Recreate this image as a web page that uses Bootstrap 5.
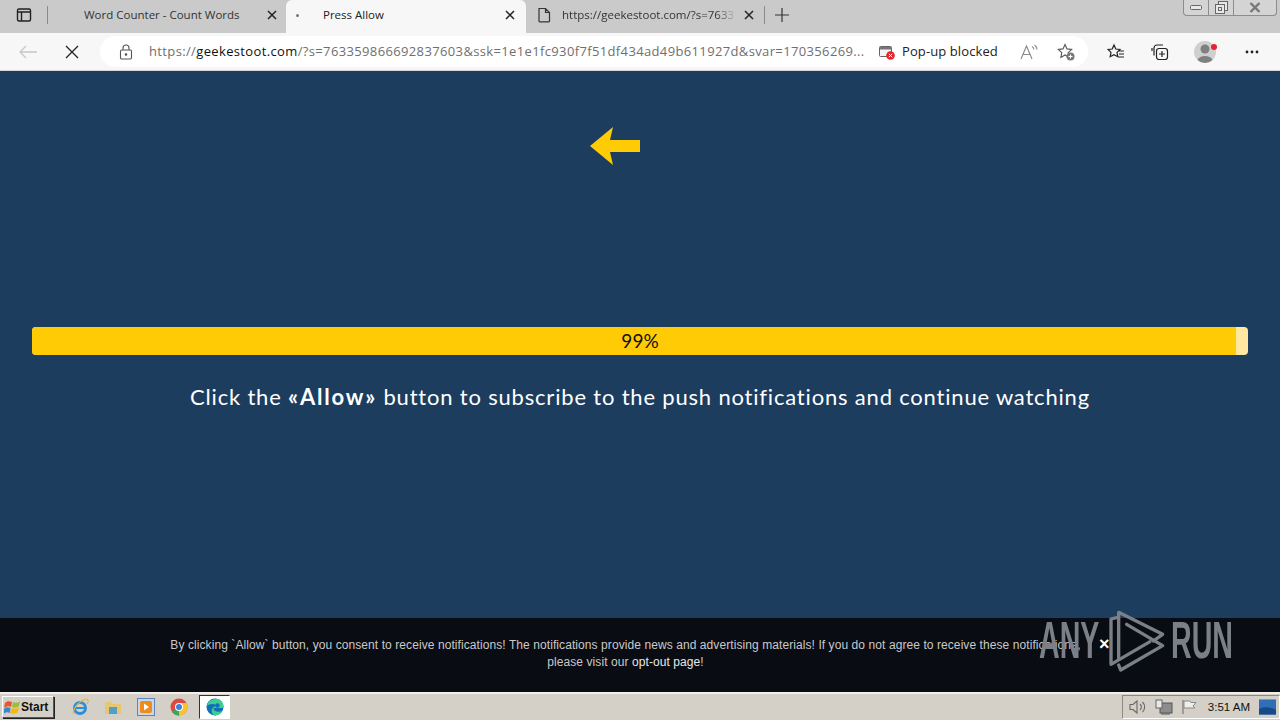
<!DOCTYPE html>
<html lang="en">
<head>
<meta charset="UTF-8" />
<meta name="viewport" content="width=device-width, initial-scale=1.0" />
<title>Press Allow</title>
<link href="https://cdn.jsdelivr.net/npm/bootstrap@5.3.3/dist/css/bootstrap.min.css" rel="stylesheet" />
<style>
  html, body { height: 720px; overflow: hidden; }
  body { width: 1280px; font-family: "Open Sans", "Liberation Sans", sans-serif; background: #1d3d5f; }
  svg { display: block; flex: none; }

  .tab-strip { height: 33px; background: #cacaca; font-size: 11.5px; color: #333; }
  .strip-btn { width: 47px; padding-bottom: 3px; }
  .strip-sep { width: 1px; height: 18px; background: #8a8a8a; margin-bottom: 3px; }
  .edge-tab { height: 33px; flex: none; padding-bottom: 3px; }
  .tab-one { width: 238px; padding-left: 36px; padding-right: 9px; }
  .tab-two { width: 240px; background: #f7f7f7; border-radius: 6px 6px 0 0; padding-left: 10px; padding-right: 11px; color: #222; }
  .tab-three { width: 238px; padding-left: 11px; padding-right: 10px; }
  .tab-dot { width: 3px; height: 3px; background: #777; border-radius: 50%; margin-right: 24px; }
  .tab-url { width: 175px; margin-left: 11px; white-space: nowrap; -webkit-mask-image: linear-gradient(90deg, #000 88%, transparent); mask-image: linear-gradient(90deg, #000 88%, transparent); }
  .new-tab { margin-left: 9px; margin-bottom: 3px; }
  .win-btns { margin-left: auto; margin-right: 3px; height: 16px; width: 94px; border: 1px solid #8d8d8d; border-top: 0; border-radius: 0 0 4px 4px; background: #d4d4d4; align-self: flex-start; }
  .win-slot { width: 25px; height: 100%; border-right: 1px solid #8d8d8d; }

  .tool-bar { height: 38px; background: #f7f7f7; border-bottom: 1px solid #d6d6d6; padding-left: 18px; }
  .stop-icon { margin-left: 27px; }
  .addr-pill { width: 988px; height: 31px; margin-left: 21px; background: #fff; border-radius: 16px; padding-left: 19px; font-size: 13px; color: #6f6f6f; white-space: nowrap; letter-spacing: .36px; }
  .addr-url { width: 716px; margin-left: 16px; overflow: hidden; }
  .addr-url b { font-weight: 400; color: #111; }
  .popup-icon { margin-left: 14px; }
  .popup-note { margin-left: 7px; color: #222; letter-spacing: .1px; }
  .read-icon { margin-left: auto; }
  .fav-add { margin-left: 19px; margin-right: 13px; }
  .tool-right { margin-left: 19px; }
  .gap-coll { margin-left: 26px; }
  .gap-prof { margin-left: 25px; }
  .gap-dots { margin-left: 27px; }

  .page-main { height: 547px; background: #1d3d5f; padding: 55px 32px 0; }
  .arrow-icon { margin-right: 50px; }
  .load-track { height: 28px; margin-top: 161px; background: #ffe9a0; border-radius: 4px; overflow: hidden; position: relative; }
  .load-fill { height: 100%; background: #ffcb05; }
  .load-label { position: absolute; inset: 0; color: #111; font-size: 19px; line-height: 28px; font-family: "Lato", sans-serif; }
  .watch-msg { margin-top: 27px; font-size: 22px; line-height: 30px; letter-spacing: .81px; color: #fff; font-family: "Lato", sans-serif; }
  .watch-msg b { letter-spacing: 1.8px; }

  .consent-bar { height: 74px; background: #090c13; padding: 19px 29px 0 0; color: #c9c9c9; font: 12px/17px "Liberation Sans", sans-serif; letter-spacing: .08px; }
  .consent-bar a { color: #e8e8e8; text-decoration: none; }
  .consent-x { position: absolute; left: 1099px; top: 637px; color: #fff; font: 700 18px/14px "Liberation Sans", sans-serif; }
  .run-mark { position: absolute; left: 1039px; top: 605px; height: 70px; color: #7b8088; }
  .run-word { font: 700 52px/70px "Liberation Sans", sans-serif; transform: scaleX(.55); transform-origin: left center; width: 61px; white-space: nowrap; }

  .task-bar { height: 28px; background: #d4d0c8; border-top: 2px solid #f1efe9; padding-left: 2px; font: 12px "Liberation Sans", sans-serif; color: #111; }
  .start-btn { width: 52px; height: 22px; border: 1px solid #fff; border-right-color: #555; border-bottom-color: #555; box-shadow: 1px 1px 0 #222; font-weight: 700; font-size: 12px; padding-left: 1px; }
  .quick-icons { margin-left: 17px; gap: 15px; }
  .edge-slot { width: 31px; height: 24px; margin-left: -4px; background: #fff; border: 1px solid #333; border-right-color: #fff; border-bottom-color: #fff; }
  .sys-tray { margin-left: auto; width: 158px; height: 24px; border: 1px solid #8c8a84; border-right-color: #fff; border-bottom-color: #fff; padding-left: 6px; }
  .clock-txt { margin-left: auto; margin-right: 1px; white-space: nowrap; font-size: 11.5px; }
  .desk-icon { margin-right: 3px; }
</style>
</head>
<body class="d-flex flex-column">

  <!-- browser tabs -->
  <div class="tab-strip d-flex align-items-center">
    <div class="strip-btn d-flex justify-content-center">
      <svg width="16" height="16" viewBox="0 0 16 16" fill="none" stroke="#222" stroke-width="1.4"><rect x="1.5" y="2" width="13" height="12" rx="1.5"/><path d="M1.5 5h13M5.5 5v9" /></svg>
    </div>
    <div class="strip-sep"></div>
    <div class="edge-tab tab-one d-flex align-items-center">
      <span>Word Counter - Count Words</span>
      <svg class="ms-auto" width="10" height="10" viewBox="0 0 10 10" stroke="#222" stroke-width="1.5"><path d="M1 1l8 8M9 1l-8 8"/></svg>
    </div>
    <div class="edge-tab tab-two d-flex align-items-center">
      <span class="tab-dot"></span>
      <span>Press Allow</span>
      <svg class="ms-auto" width="10" height="10" viewBox="0 0 10 10" stroke="#222" stroke-width="1.5"><path d="M1 1l8 8M9 1l-8 8"/></svg>
    </div>
    <div class="edge-tab tab-three d-flex align-items-center">
      <svg width="14" height="16" viewBox="0 0 14 16" fill="none" stroke="#333" stroke-width="1.2"><path d="M2 1.500h6.500L12.500 5.500V14a.8.8 0 0 1-.8.8H2.800A.8.8 0 0 1 2 14zM8.500 1.500v4h4"/></svg>
      <span class="tab-url">https://geekestoot.com/?s=7633</span>
      <svg class="ms-auto" width="10" height="10" viewBox="0 0 10 10" stroke="#222" stroke-width="1.5"><path d="M1 1l8 8M9 1l-8 8"/></svg>
    </div>
    <div class="strip-sep"></div>
    <svg class="new-tab" width="16" height="16" viewBox="0 0 16 16" stroke="#333" stroke-width="1.2"><path d="M8 1v14M1 8h14"/></svg>
    <div class="win-btns d-flex">
      <div class="win-slot d-flex align-items-center justify-content-center"><svg width="12" height="5" viewBox="0 0 12 5" fill="#e8e8e8" stroke="#666"><rect x=".5" y=".5" width="11" height="4" rx="1"/></svg></div>
      <div class="win-slot d-flex align-items-center justify-content-center"><svg width="13" height="13" viewBox="0 0 13 13" fill="#e8e8e8" stroke="#666"><rect x="3.500" y=".5" width="9" height="9"/><rect x=".5" y="3.500" width="9" height="9"/><rect x="3.500" y="6.500" width="3" height="3"/></svg></div>
      <div class="flex-fill d-flex align-items-center justify-content-center"><svg width="14" height="11" viewBox="0 0 14 11" stroke="#777" stroke-width="2.400"><path d="M2.500 1l9 9M11.500 1l-9 9"/></svg></div>
    </div>
  </div>

  <!-- address bar -->
  <div class="tool-bar d-flex align-items-center">
    <svg width="20" height="16" viewBox="0 0 20 16" fill="none" stroke="#c8c8c8" stroke-width="1.300"><path d="M19 8H2M8 2L2 8l6 6"/></svg>
    <svg class="stop-icon" width="14" height="14" viewBox="0 0 14 14" stroke="#222" stroke-width="1.300"><path d="M1 1l12 12M13 1L1 13"/></svg>
    <div class="addr-pill d-flex align-items-center">
      <svg width="14" height="16" viewBox="0 0 14 16" fill="none" stroke="#555" stroke-width="1.100"><rect x="1.500" y="6" width="11" height="9" rx="1.200"/><path d="M4 6V4a3 3 0 0 1 6 0v2"/><circle cx="7" cy="10.500" r=".8" fill="#555"/></svg>
      <div class="addr-url">https://<b>geekestoot.com</b>/?s=763359866692837603&amp;ssk=1e1e1fc930f7f51df434ad49b611927d&amp;svar=170356269...</div>
      <svg class="popup-icon" width="16" height="16" viewBox="0 0 16 16"><rect x=".5" y="2.500" width="12" height="10" rx="1" fill="#f4f4f4" stroke="#666"/><path d="M1 3h11v2.500H1z" fill="#777"/><circle cx="11.500" cy="11.500" r="4.300" fill="#e3242b"/><path d="M9.800 9.800l3.400 3.400M13.200 9.800l-3.400 3.400" stroke="#fff"/></svg>
      <span class="popup-note">Pop-up blocked</span>
      <svg class="read-icon" width="18" height="16" viewBox="0 0 18 16" fill="none" stroke="#888" stroke-width="1.100"><path d="M1 15L6.500 2 12 15M3 10.500h7M12 2.500a4 4 0 0 1 2 3M14.500 1a6 6 0 0 1 2.500 4.500"/></svg>
      <svg class="fav-add" width="18" height="18" viewBox="0 0 18 18" fill="none" stroke="#555" stroke-width="1.100"><path d="M8 1.500l2 4.400 4.700.6-3.500 3.200.9 4.700L8 12l-4.100 2.400.9-4.700L1.300 6.500 6 5.900z"/><circle cx="13.500" cy="13.500" r="4" fill="#777" stroke="none"/><path d="M13.500 11.500v4M11.500 13.500h4" stroke="#fff"/></svg>
    </div>
    <div class="tool-right d-flex align-items-center">
      <svg width="18" height="18" viewBox="0 0 18 18" fill="none" stroke="#222" stroke-width="1.200"><path d="M7 2l1.800 4 4.200.5-3 2.900.8 4.300L7 11.600l-3.800 2.100.8-4.300-3-2.900L5.200 6zM12 8h5M12 11h5M11.500 14h5.500"/></svg>
      <svg class="gap-coll" width="18" height="18" viewBox="0 0 18 18" fill="none" stroke="#222" stroke-width="1.200"><path d="M3 12.500V5a3 3 0 0 1 3-3h6"/><path d="M1 8V5"/><rect x="5.500" y="5.500" width="11" height="11" rx="2.500"/><path d="M11 8v6M8 11h6"/></svg>
      <svg class="gap-prof" width="24" height="24" viewBox="0 0 24 24"><circle cx="11" cy="12" r="11" fill="#cfcfcf"/><circle cx="11" cy="9" r="4.500" fill="#808080"/><path d="M3.500 20a8 6 0 0 1 15 0 11 11 0 0 1-15 0z" fill="#808080"/><circle cx="20" cy="7" r="3" fill="#e3242b"/></svg>
      <svg class="gap-dots" width="14" height="4" viewBox="0 0 14 4" fill="#222"><circle cx="2" cy="2" r="1.400"/><circle cx="7" cy="2" r="1.400"/><circle cx="12" cy="2" r="1.400"/></svg>
    </div>
  </div>

  <!-- page content -->
  <main class="page-main">
    <div class="d-flex justify-content-center">
      <svg class="arrow-icon" width="52" height="40" viewBox="0 0 52 40"><path d="M1 20L24 1l-3 13h30v12H21l3 13z" fill="#ffcb05"/></svg>
    </div>
    <div class="load-track">
      <div class="load-fill" style="width: 99%"></div>
      <div class="load-label text-center">99%</div>
    </div>
    <p class="watch-msg text-center mb-0">Click the <b>«Allow»</b> button to subscribe to the push notifications and continue watching</p>
  </main>

  <!-- consent footer -->
  <div class="consent-bar text-center">
    By clicking `Allow` button, you consent to receive notifications! The notifications provide news and advertising materials! If you do not agree to receive these notifications,<br />
    please visit our <a href="#">opt-out page</a>!
  </div>
  <span class="consent-x">×</span>
  <div class="run-mark d-flex align-items-center">
    <div class="run-word">ANY</div>
    <svg width="71" height="70" viewBox="0 0 213 210" fill="none" stroke="currentColor" stroke-width="10" stroke-linejoin="round" stroke-linecap="round"><path d="M50 38L33 42V178L150 110"/><path d="M56 160V22L188 88L160 108"/><path d="M80 58L188 122L62 195L56 180"/></svg>
    <div class="run-word">RUN</div>
  </div>

  <!-- windows taskbar -->
  <div class="task-bar d-flex align-items-center">
    <div class="start-btn d-flex align-items-center">
      <svg width="17" height="16" viewBox="0 0 17 16"><path d="M1 4C3 2 5 2 8 3L7 8C5 7 3 7 0 9z" fill="#e4572e"/><path d="M9 3c2 1 5 1 7-1l-1 5c-2 2-5 2-7 1z" fill="#9bbf3b"/><path d="M0 10c2-2 4-2 6.500-1L6 14c-2-1-4-1-7 1z" fill="#3a86d1"/><path d="M8 9c2 1 5 1 7-1l-1 5c-2 2-5 2-8 1z" fill="#f2b90f"/></svg>
      <span>Start</span>
    </div>
    <div class="quick-icons d-flex align-items-center">
      <svg width="18" height="18" viewBox="0 0 18 18" fill="none"><circle cx="9" cy="10" r="5.500" stroke="#2d8fd8" stroke-width="3"/><path d="M4 10h10" stroke="#2d8fd8" stroke-width="2"/><path d="M3 15C1 17 3 5 15 1c2 0 3 2 1 5" stroke="#e5b53a" stroke-width="1.200"/></svg>
      <svg width="18" height="18" viewBox="0 0 18 18"><path d="M1 4h6l2 2h8v10H1z" fill="#e7c66f"/><rect x="5" y="9" width="8" height="7" fill="#4f9fc9"/></svg>
      <svg width="18" height="18" viewBox="0 0 18 18"><rect x=".5" y=".5" width="17" height="17" fill="#c8d6ea" stroke="#5e86b8"/><rect x="3" y="3" width="12" height="12" rx="2" fill="#ef8a1c"/><path d="M7 5.500l5 3.500-5 3.500z" fill="#fff"/></svg>
      <svg width="18" height="18" viewBox="0 0 18 18"><circle cx="9" cy="9" r="8.500" fill="#dd4b3e"/><path d="M9 9L1.700 13.500A8.500 8.500 0 0 0 9 17.500z" fill="#3aa757"/><path d="M9 5h7.500A8.500 8.500 0 0 1 9 17.500z" fill="#f7c52b"/><circle cx="9" cy="9" r="4" fill="#fff"/><circle cx="9" cy="9" r="3" fill="#3f7fe0"/></svg>
      <div class="edge-slot d-flex align-items-center justify-content-center">
        <svg width="18" height="18" viewBox="0 0 18 18"><circle cx="9" cy="9" r="8.500" fill="#0f6fb8"/><path d="M1 8C2 2 8 .5 12 1c4 1 6 5 5.500 9H7.500c0 3 4 5 8.500 3-2 3-4 4.500-7 4.500C6 17 5 13 6 11c1-2 3-3.500 5-3C8 5 3 6 1 8z" fill="#3ecf8e"/><circle cx="11.500" cy="7.500" r="2.200" fill="#0f6fb8"/></svg>
      </div>
    </div>
    <div class="sys-tray d-flex align-items-center gap-2">
      <svg width="18" height="16" viewBox="0 0 18 16" fill="none" stroke="#666" stroke-width="1.100"><path d="M1 5.500h3L8 2v12L4 10.500H1zM11 5a4 4 0 0 1 0 6M13.500 3a7 7 0 0 1 0 10" /></svg>
      <svg width="18" height="16" viewBox="0 0 18 16"><rect x="5" y="4" width="12" height="10" fill="#8d8d8d" stroke="#555"/><rect x="1" y="1" width="6" height="8" fill="#e8e8e8" stroke="#666"/><path d="M6 15h9" stroke="#555"/></svg>
      <svg width="16" height="16" viewBox="0 0 16 16"><path d="M2 1v14" stroke="#777" stroke-width="1.200"/><path d="M3 2h6l1 1.500h5l-3 3.500 2 2H3z" fill="#f0eee8" stroke="#8a8a8a"/></svg>
      <span class="clock-txt">3:51 AM</span>
      <svg class="desk-icon" width="17" height="16" viewBox="0 0 18 16"><rect width="18" height="16" fill="#2f6fb7"/><path d="M0 10c6-3 12-2 18 1v5H0z" fill="#184a86"/></svg>
    </div>
  </div>
</body>
</html>
